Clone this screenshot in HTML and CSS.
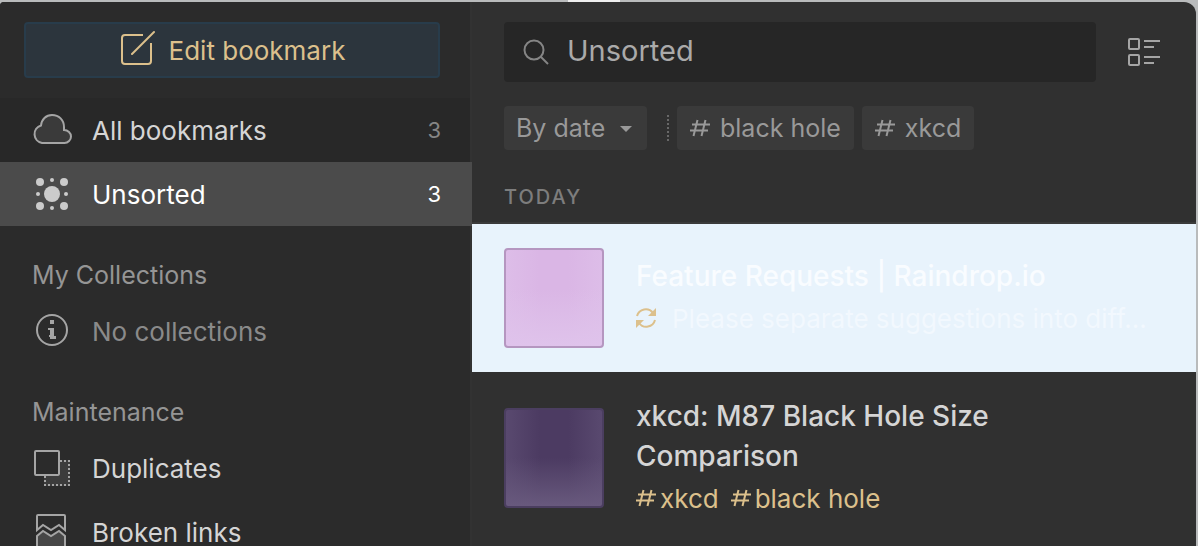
FILE: index.html
```
<!DOCTYPE html>
<html lang="en">
<head>
    <meta charset="UTF-8">
    <meta name="viewport" content="width=device-width, initial-scale=1.0">
    <title>Unsorted - Bookmarks</title>
    <link rel="stylesheet" href="styles.css">
</head>
<body>
    <!-- shared tag icon -->
    <svg class="symbols" aria-hidden="true">
        <symbol id="hash" viewBox="0 0 20 18">
            <path d="M2 5.500h18M0 11.500h18M7.500 1l-4 16M15.500 1l-4 16" fill="none" stroke="currentColor" stroke-width="2"/>
        </symbol>
    </svg>

    <div class="popup">
        <aside class="sidebar">
            <div class="sidebar-header">
                <button class="edit-button" type="button">
                    <svg width="36" height="40" viewBox="0 0 36 40" fill="none" stroke="currentColor" stroke-width="2">
                        <path d="M24 5H6a3 3 0 0 0-3 3v23a3 3 0 0 0 3 3h23a3 3 0 0 0 3-3V13"/>
                        <path d="M13 24L35 2" stroke-linecap="round"/>
                    </svg>
                    Edit bookmark
                </button>
            </div>

            <nav class="sidebar-nav">
                <a class="nav-item nav-all" href="#all">
                    <svg class="nav-icon" width="40" height="40" viewBox="0 0 40 40">
                        <path d="M10 33a9 9 0 0 1-1-17.500C9.500 9.500 14 5 20 5c7 0 12 5 12 12v3c4 0 7 3 7 6.500S36 33 32.500 33z" fill="#3a3a3a" stroke="currentColor" stroke-width="2"/>
                    </svg>
                    <span class="nav-label">All bookmarks</span>
                    <span class="nav-count">3</span>
                </a>
                <a class="nav-item active" href="#unsorted">
                    <svg class="nav-icon" width="40" height="40" viewBox="0 0 40 40" fill="currentColor">
                        <circle cx="20" cy="20" r="8"/>
                        <circle cx="8" cy="8" r="4"/>
                        <circle cx="32" cy="8" r="4"/>
                        <circle cx="8" cy="32" r="4"/>
                        <circle cx="32" cy="32" r="4"/>
                        <circle cx="20" cy="6" r="2"/>
                        <circle cx="6" cy="20" r="2"/>
                        <circle cx="34" cy="20" r="2"/>
                        <circle cx="20" cy="34" r="2"/>
                    </svg>
                    <span class="nav-label">Unsorted</span>
                    <span class="nav-count">3</span>
                </a>

                <h2 class="nav-title">My Collections</h2>
                <div class="nav-item empty">
                    <svg class="nav-icon" width="40" height="40" viewBox="0 0 40 40">
                        <circle cx="20" cy="19" r="15" fill="none" stroke="currentColor" stroke-width="2"/>
                        <path d="M18 9h4v4h-4zM16 17h6v8h2v3h-6v-2h-1v-2h1v-5h-2z" fill="currentColor"/>
                    </svg>
                    <span class="nav-label">No collections</span>
                </div>

                <h2 class="nav-title">Maintenance</h2>
                <a class="nav-item" href="#duplicates">
                    <svg class="nav-icon" width="40" height="40" viewBox="0 0 40 40">
                        <path d="M28 12h10v26H12V28h16z" fill="#3c3c3c"/>
                        <path d="M28 13h9v24H13V28" fill="none" stroke="currentColor" stroke-width="2" stroke-dasharray="2 2"/>
                        <rect x="3" y="3" width="24" height="24" rx="1" fill="none" stroke="currentColor" stroke-width="2"/>
                    </svg>
                    <span class="nav-label">Duplicates</span>
                </a>
                <a class="nav-item" href="#broken">
                    <svg class="nav-icon" width="40" height="40" viewBox="0 0 40 40" stroke="currentColor" stroke-width="2">
                        <path d="M5 18V4q0-1 1-1h26q1 0 1 1v14l-6-5-8 5-8-5z" fill="none"/>
                        <path d="M5 38V24l6-5 8 5 8-5 6 5v14z" fill="#474747"/>
                    </svg>
                    <span class="nav-label">Broken links</span>
                </a>
            </nav>
        </aside>

        <main class="content">
            <div class="toolbar">
                <label class="search">
                    <svg width="28" height="28" viewBox="0 0 28 28" fill="none" stroke="currentColor" stroke-width="2">
                        <circle cx="12" cy="12" r="9.500"/>
                        <path d="M18.500 18.500L26 26"/>
                    </svg>
                    <input type="text" value="Unsorted" aria-label="Search">
                </label>
                <button class="view-button" type="button" aria-label="Change view">
                    <svg width="32" height="32" viewBox="0 0 32 32" fill="none" stroke="currentColor" stroke-width="2">
                        <rect x="1" y="3" width="10" height="10" rx="1"/>
                        <rect x="1" y="19" width="10" height="10" rx="1"/>
                        <path d="M16 5h16M16 11h10M16 21h16M16 27h10"/>
                    </svg>
                </button>
            </div>

            <div class="filters">
                <div class="sort">
                    <select aria-label="Sort">
                        <option>By date</option>
                    </select>
                    <svg class="sort-caret" width="12" height="6" viewBox="0 0 12 6" fill="currentColor">
                        <path d="M0 0h12L6 6z"/>
                    </svg>
                </div>
                <span class="separator"></span>
                <button class="chip" type="button">
                    <svg width="20" height="18"><use href="#hash"/></svg>
                    black hole
                </button>
                <button class="chip" type="button">
                    <svg width="20" height="18"><use href="#hash"/></svg>
                    xkcd
                </button>
            </div>

            <h2 class="day">Today</h2>

            <article class="bookmark selected">
                <div class="thumb thumb-pink"></div>
                <div class="info">
                    <a class="title" href="#feature-requests">Feature Requests | Raindrop.io</a>
                    <div class="meta">
                        <svg class="sync" width="20" height="20" viewBox="0 0 20 20">
                            <path d="M1 8a9 9 0 0 1 16-3M19 12a9 9 0 0 1-16 3" fill="none" stroke="currentColor" stroke-width="2"/>
                            <path d="M20 0v8h-8zM0 20v-8h8z" fill="currentColor"/>
                        </svg>
                        <span class="excerpt">Please separate suggestions into diff…</span>
                    </div>
                </div>
            </article>

            <article class="bookmark">
                <div class="thumb thumb-purple"></div>
                <div class="info">
                    <a class="title" href="#xkcd-m87">xkcd: M87 Black Hole Size Comparison</a>
                    <div class="meta tags">
                        <a class="tag" href="#tag-xkcd"><svg width="20" height="18"><use href="#hash"/></svg>xkcd</a>
                        <a class="tag" href="#tag-black-hole"><svg width="20" height="18"><use href="#hash"/></svg>black hole</a>
                    </div>
                </div>
            </article>
        </main>
    </div>
</body>
</html>
```
FILE: styles.css
```
* {
    box-sizing: border-box;
}

body {
    margin: 0;
    padding: 2px 2px 0 0;
    height: 100vh;
    overflow: hidden;
    background: linear-gradient(to right, #b9bbbc 568px, #eeeeee 568px, #eeeeee 620px, #b9bbbc 620px);
    font-family: Inter, "Liberation Sans", sans-serif;
    font-size: 26px;
    color: #d5d5d5;
}

a {
    color: inherit;
    text-decoration: none;
}

button,
input,
select {
    font: inherit;
    color: inherit;
    border: none;
    margin: 0;
}

svg {
    display: block;
    flex-shrink: 0;
}

.symbols {
    display: none;
}

.popup {
    display: flex;
    height: 100%;
    overflow: hidden;
    background: #303030;
    border-radius: 4px 12px 0 0;
}

/* Sidebar */
.sidebar {
    width: 472px;
    flex-shrink: 0;
    background: linear-gradient(to right, transparent calc(100% - 2px), #323232 0), #2b2b2b;
}

.sidebar-header {
    padding: 20px 32px 20px 24px;
}

.edit-button {
    display: flex;
    align-items: center;
    justify-content: center;
    gap: 14px;
    width: 100%;
    height: 56px;
    padding: 0;
    border: 2px solid #283c4b;
    border-radius: 4px;
    background: #2c353d;
    color: #dcc08c;
}

.nav-item {
    display: flex;
    align-items: center;
    gap: 20px;
    height: 64px;
    padding: 0 31px 0 32px;
}

.nav-all {
    background: #282828;
    margin-right: 2px;
    padding-right: 29px;
}

.nav-icon {
    color: #a5a5a5;
}

.nav-label {
    flex: 1;
}

.nav-count {
    font-size: 22px;
    color: #858585;
}

.active {
    background: #4b4b4b;
    color: #ffffff;
}

.active .nav-icon {
    color: #cbcbcb;
}

.active .nav-count {
    color: #ffffff;
}

.empty {
    color: #8a8a8a;
}

.nav-title {
    margin: 25px 0 0;
    padding: 0 32px;
    font-size: 25px;
    font-weight: 400;
    line-height: 48px;
    color: #959595;
}

/* Toolbar */
.content {
    flex: 1;
    min-width: 0;
}

.toolbar {
    display: flex;
    align-items: center;
    gap: 32px;
    padding: 20px 36px 24px 32px;
}

.search {
    display: flex;
    align-items: center;
    flex: 1;
    gap: 17px;
    min-width: 0;
    height: 60px;
    padding: 0 18px;
    border-radius: 4px;
    background: #262626;
    color: #858585;
}

.search input {
    flex: 1;
    min-width: 0;
    height: 56px;
    padding: 0 0 4px;
    background: none;
    outline: none;
    font-size: 29px;
    color: #aaaaaa;
}

.view-button {
    padding: 0;
    background: none;
    color: #a5a5a5;
}

.filters {
    display: flex;
    align-items: center;
    gap: 8px;
    padding: 0 32px;
    font-size: 25px;
    color: #999999;
}

.sort {
    position: relative;
}

.sort select {
    appearance: none;
    height: 44px;
    padding: 0 41px 0 12px;
    border-radius: 4px;
    background: #3a3a3a;
}

.sort-caret {
    position: absolute;
    right: 15px;
    top: 20px;
    pointer-events: none;
}

/* dotted line between sorting and tags */
.separator {
    width: 2px;
    height: 26px;
    margin-left: 12px;
    background: repeating-linear-gradient(#686868 0 2px, transparent 2px 4px);
}

.chip {
    display: flex;
    align-items: center;
    gap: 10px;
    height: 44px;
    padding: 0 13px;
    border-radius: 4px;
    background: #3a3a3a;
}

.day {
    margin: 0;
    padding: 24px 32px 0;
    height: 74px;
    border-bottom: 2px solid #3a3a3a;
    font-size: 20px;
    font-weight: 500;
    line-height: 46px;
    letter-spacing: 2px;
    text-transform: uppercase;
    color: #7d7d7d;
}

/* Bookmarks */
.bookmark {
    display: flex;
    align-items: center;
    gap: 32px;
    padding: 24px 32px;
}

.thumb {
    width: 100px;
    height: 100px;
    flex-shrink: 0;
    border-radius: 4px;
    border: 2px solid;
}

.thumb-pink {
    border-color: #b596c0;
    background:
        linear-gradient(to top, #dfc3eb, transparent 60%),
        linear-gradient(to right, #ddbde8, transparent 35%, transparent 65%, #ddbde8),
        #dab6e5;
}

.thumb-purple {
    border-color: #4b3e60;
    background:
        linear-gradient(to top, #68597d, transparent 50%),
        linear-gradient(to right, #59496f, transparent 35%, transparent 65%, #59496f),
        #4c3b62;
}

.info {
    flex: 1;
    min-width: 0;
}

.title {
    display: block;
    font-size: 28px;
    font-weight: 500;
    line-height: 40px;
    max-width: 420px;
}

.meta {
    display: flex;
    align-items: center;
    gap: 16px;
    height: 44px;
}

.sync,
.tags {
    color: #dcc08c;
}

.excerpt {
    overflow: hidden;
    text-overflow: ellipsis;
    white-space: nowrap;
}

.tags {
    gap: 12px;
}

.tag {
    display: flex;
    align-items: center;
    gap: 4px;
}

.selected {
    background: #e8f3fc;
    color: #f9fcff;
}

.selected .title {
    max-width: none;
}

.selected .excerpt {
    color: #f2f8fe;
}
```
